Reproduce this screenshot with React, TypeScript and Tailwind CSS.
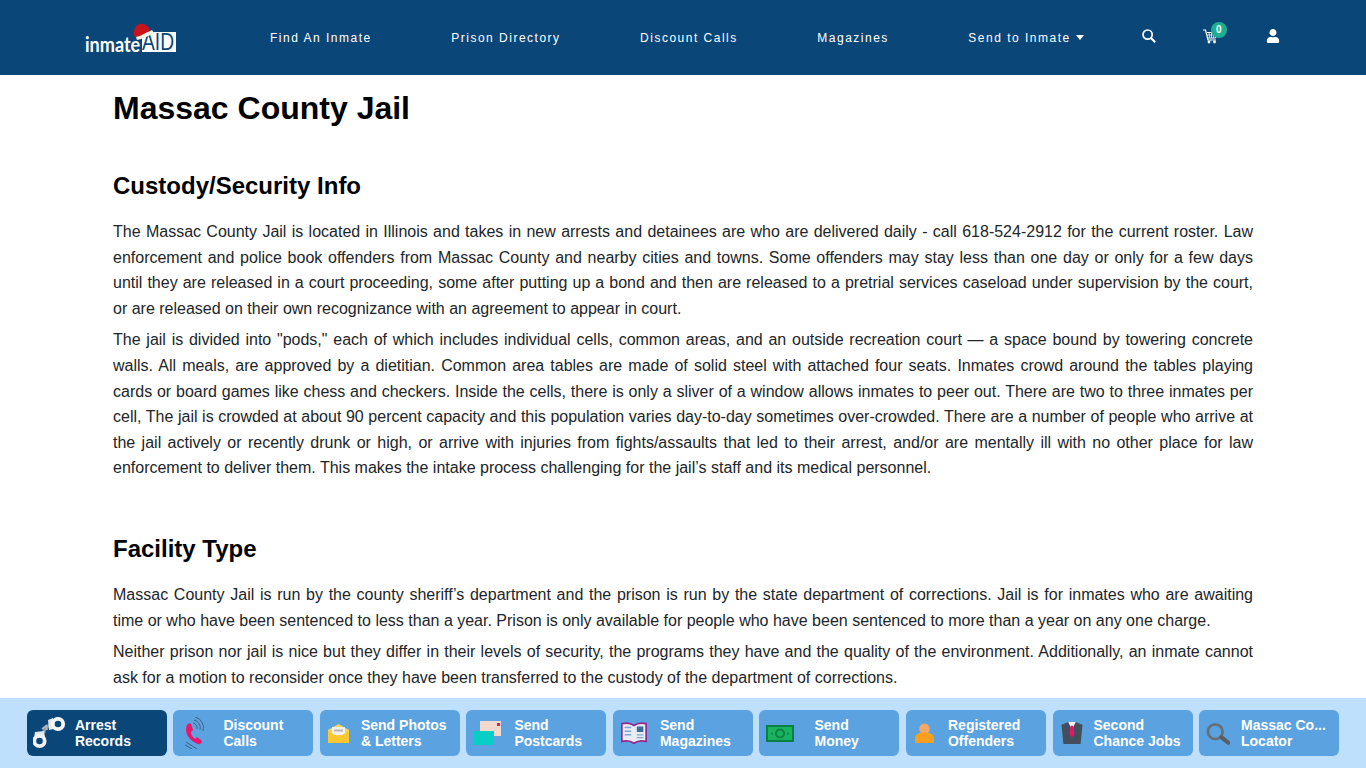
import { FaUser } from "react-icons/fa";
import type { ReactNode } from "react";

const Cuffs = () => (
  <svg width="34" height="32" viewBox="0 0 34 32" fill="none">
    <path d="M11 16 C11 11 14 9 18 8" stroke="#8f99a3" strokeWidth="3" />
    <path d="M9 12 L13 9 L14 13" stroke="#aeb6bd" strokeWidth="2" />
    <path d="M15 3 L20 1 L21 12 L16 13Z" fill="#e4e8eb" />
    <circle cx="25" cy="7" r="5.2" stroke="#f4f6f8" strokeWidth="3.8" />
    <path d="M2 15 L11 14 L12 20 L1 21Z" fill="#e4e8eb" />
    <circle cx="6.5" cy="24" r="5.2" stroke="#f1f3f5" strokeWidth="3.8" />
  </svg>
);
const Phone = () => (
  <svg width="20" height="32" viewBox="0 0 20 32" fill="none">
    <path d="M2 8 C-1 15 3 23 13 27 C15 28 17 26 17 24 L12 20 L10 22 C7 20 6 17 6 15 L8 13 L6 7 C4 6 3 7 2 8Z" fill="#ec1569" />
    <path d="M8 6 a5 5 0 0 1 4 6 M9 3 a8 8 0 0 1 6 10 M10 0 a11 11 0 0 1 8 14" stroke="#44617e" strokeWidth="1" />
    <path d="M1 25 L12 32 M0 28 L7 32" stroke="#44617e" strokeWidth="1" />
  </svg>
);
const Mail = () => (
  <svg width="21" height="19" viewBox="0 0 21 19">
    <path d="M0 6 L10.5 0 L21 6 V19 H0Z" fill="#fbd34d" />
    <path d="M4 3 H17 V11 H4Z" fill="#f3f1ec" />
    <path d="M6 5.5 H15 V7.5 H6Z" fill="#b9b5ae" />
    <path d="M0 7 L10.5 13 L21 7 V19 H0Z" fill="#fdc72f" />
  </svg>
);
const Postcard = () => (
  <svg width="29" height="25" viewBox="0 0 29 25">
    <path d="M7 0 H28 V15 H7Z" fill="#f0d9cd" />
    <path d="M24 2 H27 V5 H24Z" fill="#e5176b" />
    <path d="M0 10 H21 V24 H0Z" fill="#08cfc5" />
  </svg>
);
const Book = () => (
  <svg width="28" height="24" viewBox="0 0 30 24" fill="none">
    <path d="M15 4 C11 1 6 1 2 2 V21 C6 20 11 20 15 23 C19 20 24 20 28 21 V2 C24 1 19 1 15 4Z" fill="#e8edf2" stroke="#93298f" strokeWidth="1.8" />
    <path d="M5 6 H12 M5 10 H12 M5 14 H12" stroke="#7fa6c6" strokeWidth="1.6" />
    <path d="M18 5 H25 V11 H18Z" fill="#386f9f" />
    <path d="M18 14 H25 M18 17 H25" stroke="#7fa6c6" strokeWidth="1.5" />
  </svg>
);
const Money = () => (
  <svg width="28" height="17" viewBox="0 0 28 17">
    <path d="M0 0 H28 V17 H0Z" fill="#0c7f48" />
    <path d="M2 2 H26 V15 H2Z" fill="#18b45c" />
    <circle cx="14" cy="8.5" r="5" fill="#0c7f48" />
    <circle cx="14" cy="8.5" r="3" fill="#18b45c" />
    <circle cx="6" cy="8.5" r="1" fill="#0c7f48" />
    <circle cx="22" cy="8.5" r="1" fill="#0c7f48" />
  </svg>
);
const Person = () => (
  <svg width="19" height="20" viewBox="0 0 20 21">
    <circle cx="10" cy="6" r="5.5" fill="#f4a968" />
    <path d="M0 21 V16 C0 12 4 10 10 10 C16 10 20 12 20 16 V21Z" fill="#f8a01e" />
  </svg>
);
const Suit = () => (
  <svg width="22" height="22" viewBox="0 0 22 23">
    <path d="M0 3 L7 0 L15 0 L22 3 L20 23 H2Z" fill="#42505d" />
    <path d="M7 0 L11 8 L15 0Z" fill="#f2f2f2" />
    <path d="M9.5 4 H12.5 L13.5 13 L11 16 L8.5 13Z" fill="#e5176b" />
  </svg>
);
const Magnifier = () => (
  <svg width="24" height="23" viewBox="0 0 26 24" fill="none">
    <circle cx="10" cy="10" r="8" stroke="#66707a" strokeWidth="3" />
    <path d="M16.5 16 L24 22" stroke="#5b5f63" strokeWidth="4.5" strokeLinecap="round" />
  </svg>
);
const SearchIcon = () => (
  <svg width="14" height="14" viewBox="0 0 14 14" fill="none">
    <circle cx="5.6" cy="5.6" r="4.6" stroke="white" strokeWidth="1.7" />
    <path d="M9 9 L13.2 13.2" stroke="white" strokeWidth="2" />
  </svg>
);
const Cart = () => (
  <svg width="14" height="15" viewBox="0 0 14 15" fill="none">
    <path d="M0 1 H2.5 L5 11 H13" stroke="white" strokeWidth="1.2" />
    <path d="M3.5 3.5 H13.5 L12.5 9 H4.5" stroke="white" strokeWidth="1" />
    <path d="M6 3.5 L6.6 9 M8.5 3.5 V9 M11 3.5 L10.5 9 M4 6 H13" stroke="white" strokeWidth="0.8" />
    <circle cx="6" cy="13" r="1.4" fill="white" />
    <circle cx="11.5" cy="13" r="1.4" fill="white" />
  </svg>
);

const Logo = () => (
  <div className="relative h-[29px] w-[92px] shrink-0">
    <span className="absolute left-0 top-[9px] origin-left scale-x-[0.86] font-['Lato',sans-serif] text-[21px] font-bold leading-[24px] text-white">inmate</span>
    <span className="absolute left-[57px] top-[9px] h-[20px] w-[34px] bg-white">
      <span className="absolute left-0 top-0 origin-left scale-x-[0.8] text-[24px] leading-[20px] text-[#0b4678]">AID</span>
    </span>
    <svg className="absolute left-[48px] top-0" width="22" height="18" viewBox="0 0 22 18">
      <path d="M1 12 C0 5 5 0 10 1 C15 2 17 6 17 8 L3 15Z" fill="#c8141a" />
      <path d="M3 14 C8 13 13 10 19 7 L21 10 C16 13 9 16 4 17Z" fill="#f5efe4" />
    </svg>
  </div>
);

const NavLink = ({ children, className = "" }: { children: ReactNode; className?: string }) => (
  <a className={`text-[12px] tracking-[1.5px] text-white ${className}`}>{children}</a>
);

const cards: { a: string; b: string; icon: ReactNode; box: string; active?: boolean }[] = [
  { a: "Arrest", b: "Records", icon: <Cuffs />, box: "w-[48px] pl-[6px]", active: true },
  { a: "Discount", b: "Calls", icon: <Phone />, box: "w-[50px] pl-[12px]" },
  { a: "Send Photos", b: "& Letters", icon: <Mail />, box: "w-[41px] pl-[8px]" },
  { a: "Send", b: "Postcards", icon: <Postcard />, box: "w-[48px] pl-[7px]" },
  { a: "Send", b: "Magazines", icon: <Book />, box: "w-[47px] pl-[7px]" },
  { a: "Send", b: "Money", icon: <Money />, box: "w-[55px] pl-[7px]" },
  { a: "Registered", b: "Offenders", icon: <Person />, box: "w-[42px] pl-[9px]" },
  { a: "Second", b: "Chance Jobs", icon: <Suit />, box: "w-[41px] pl-[8px]" },
  { a: "Massac Co...", b: "Locator", icon: <Magnifier />, box: "w-[42px] pl-[7px]" },
];

const P = ({ children, className = "mb-[6px]" }: { children: ReactNode; className?: string }) => (
  <p className={`text-justify text-[16px] leading-[25.6px] text-[#212529] ${className}`}>{children}</p>
);
const H2 = ({ children, className = "" }: { children: ReactNode; className?: string }) => (
  <h2 className={`text-[24px] font-bold leading-[29px] text-black ${className}`}>{children}</h2>
);

export default function App() {
  return (
    <div className="h-[768px] overflow-hidden bg-white font-['Liberation_Sans',Arial,sans-serif]">
      <header className="flex h-[75px] items-center bg-[#0b4678] pl-[85px]">
        <Logo />
        <nav className="ml-[93px] flex items-center gap-[79.5px]">
          <NavLink>Find An Inmate</NavLink>
          <NavLink>Prison Directory</NavLink>
          <NavLink>Discount Calls</NavLink>
          <NavLink>Magazines</NavLink>
          <NavLink className="flex items-center gap-[5px]">
            Send to Inmate
            <span className="mt-[-1px] h-0 w-0 border-x-[4.5px] border-t-[5px] border-x-transparent border-t-white" />
          </NavLink>
        </nav>
        <div className="ml-[58px] mt-[-3px] flex items-center">
          <SearchIcon />
          <div className="relative ml-[47px]">
            <Cart />
            <span className="absolute left-[8px] top-[-7px] flex h-[16px] w-[16px] items-center justify-center rounded-full bg-[#1fae8f] text-[10px] font-bold text-white">0</span>
          </div>
          <FaUser size={14} className="ml-[49px] text-white" />
        </div>
      </header>

      <main className="mx-auto w-[1140px]">
        <h1 className="pt-[14px] text-[32px] font-bold leading-[38px] text-black">Massac County Jail</h1>
        <H2 className="mt-[44px] mb-[19px]">Custody/Security Info</H2>
        <P>The Massac County Jail is located in Illinois and takes in new arrests and detainees are who are delivered daily - call 618-524-2912 for the current roster. Law enforcement and police book offenders from Massac County and nearby cities and towns. Some offenders may stay less than one day or only for a few days until they are released in a court proceeding, some after putting up a bond and then are released to a pretrial services caseload under supervision by the court, or are released on their own recognizance with an agreement to appear in court.</P>
        <P>The jail is divided into "pods," each of which includes individual cells, common areas, and an outside recreation court — a space bound by towering concrete walls. All meals, are approved by a dietitian. Common area tables are made of solid steel with attached four seats. Inmates crowd around the tables playing cards or board games like chess and checkers. Inside the cells, there is only a sliver of a window allows inmates to peer out. There are two to three inmates per cell, The jail is crowded at about 90 percent capacity and this population varies day-to-day sometimes over-crowded. There are a number of people who arrive at the jail actively or recently drunk or high, or arrive with injuries from fights/assaults that led to their arrest, and/or are mentally ill with no other place for law enforcement to deliver them. This makes the intake process challenging for the jail’s staff and its medical personnel.</P>
        <H2 className="mt-[53px] mb-[19px]">Facility Type</H2>
        <P>Massac County Jail is run by the county sheriff’s department and the prison is run by the state department of corrections. Jail is for inmates who are awaiting time or who have been sentenced to less than a year. Prison is only available for people who have been sentenced to more than a year on any one charge.</P>
        <P>Neither prison nor jail is nice but they differ in their levels of security, the programs they have and the quality of the environment. Additionally, an inmate cannot ask for a motion to reconsider once they have been transferred to the custody of the department of corrections.</P>
      </main>

      <div className="fixed inset-x-0 bottom-0 flex h-[70px] items-center gap-[6.53px] bg-[#bfe0fd] pl-[26.9px]">
        {cards.map((c) => (
          <a key={c.a + c.b} className={`flex h-[46px] w-[140px] shrink-0 items-center rounded-[6px] ${c.active ? "bg-[#0b4678]" : "bg-[#5ba2e0]"}`}>
            <span className={`flex shrink-0 items-center ${c.box}`}>{c.icon}</span>
            <span className="text-[14px] font-bold leading-[16px] text-white">{c.a}<br />{c.b}</span>
          </a>
        ))}
      </div>
    </div>
  );
}
